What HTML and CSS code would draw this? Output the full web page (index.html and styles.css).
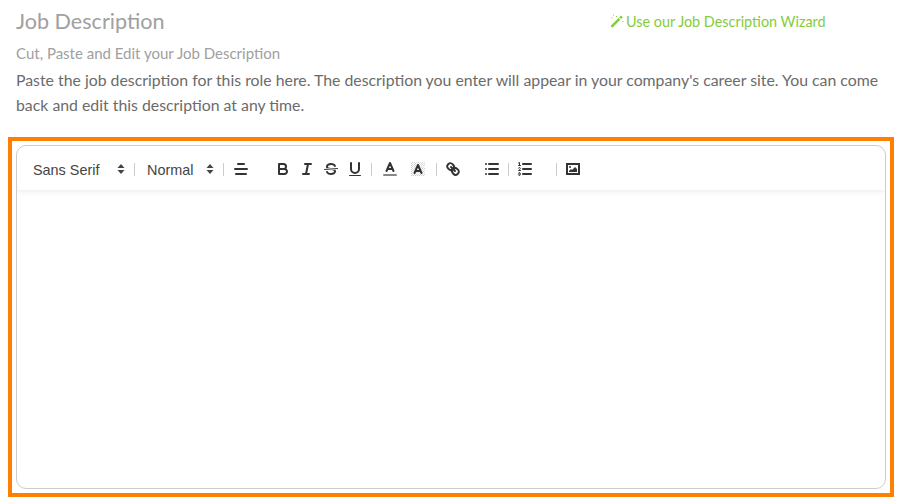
FILE: index.html
```html
<!DOCTYPE html>
<html lang="en">
<head>
    <meta charset="UTF-8">
    <title>Job Description</title>
    <link rel="stylesheet" href="styles.css">
</head>
<body>

<!-- heading -->
<header class="head-row">
    <h2 class="title">Job Description</h2>
    <a class="wizard-link" href="#">
        <svg class="wand" viewBox="0 0 14 14" width="14" height="14">
            <path d="M.5 12 8.5 4l1.8 1.8-8 8Z"/>
            <path d="M9.2 3.3l1.8-1.8 1.8 1.8-1.8 1.8Z"/>
            <path d="M3 .5h1v1H3ZM6 2h1v1H6ZM1.5 3.5h1v1h-1ZM12.5 7h1v1h-1Z"/>
        </svg>Use our Job Description Wizard</a>
</header>
<p class="subtitle">Cut, Paste and Edit your Job Description</p>
<p class="intro">Paste the job description for this role here. The description you enter will appear in your company's career site. You can come back and edit this description at any time.</p>

<!-- editor -->
<section class="highlight">
    <div class="editor">
        <div class="toolbar">
            <span class="picker picker-font">Sans Serif
                <svg class="arrows" viewBox="0 0 8 12" width="8" height="12"><path d="M4 1 7.5 5h-7ZM4 11 .5 7h7Z"/></svg>
            </span>
            <i class="sep sep-picker"></i>
            <span class="picker picker-size">Normal
                <svg class="arrows" viewBox="0 0 8 12" width="8" height="12"><path d="M4 1 7.5 5h-7ZM4 11 .5 7h7Z"/></svg>
            </span>
            <i class="sep"></i>
            <button class="btn btn-align">
                <svg viewBox="0 0 18 18"><path class="line" d="M15 9H3M14 14H4M12 4H6"/></svg>
            </button>
            <button class="btn">
                <svg viewBox="0 0 18 18">
                    <path class="line" d="M5,4H9.5A2.5,2.5,0,0,1,12,6.5v0A2.5,2.5,0,0,1,9.5,9H5V4Z"/>
                    <path class="line" d="M5,9h5.5A2.5,2.5,0,0,1,13,11.5v0A2.5,2.5,0,0,1,10.5,14H5V9Z"/>
                </svg>
            </button>
            <button class="btn">
                <svg viewBox="0 0 18 18"><path class="line" d="M7 4h6M5 14h6M8 14l2-10"/></svg>
            </button>
            <button class="btn">
                <svg viewBox="0 0 18 18">
                    <path class="thin" d="M15.5 8.5 2.5 9.5"/>
                    <path class="solid" d="M9.007,8C6.542,7.791,6,7.519,6,6.5,6,5.792,7.283,5,9,5c1.571,0,2.765.679,2.969,1.309a1,1,0,0,0,1.9-.617C13.356,4.106,11.354,3,9,3,6.2,3,4,4.538,4,6.5a3.2,3.2,0,0,0,.5,1.843Z"/>
                    <path class="solid" d="M8.984,10C11.457,10.208,12,10.479,12,11.5c0,.708-1.283,1.5-3,1.5-1.571,0-2.765-.679-2.969-1.309a1,1,0,1,0-1.9.617C4.644,13.894,6.646,15,9,15c2.8,0,5-1.538,5-3.5a3.2,3.2,0,0,0-.5-1.843Z"/>
                </svg>
            </button>
            <button class="btn">
                <svg viewBox="0 0 18 18">
                    <path class="line" d="M5,3V9a4.012,4.012,0,0,0,4,4H9a4.012,4.012,0,0,0,4-4V3"/>
                    <rect class="solid" x="3" y="15" width="12" height="1" rx=".5"/>
                </svg>
            </button>
            <i class="sep sep-tight"></i>
            <button class="btn btn-color">
                <svg viewBox="0 0 18 18">
                    <path class="color-bar" d="M3 15h12"/>
                    <path class="line" d="M5.5 11 9 3l3.5 8M11.63 9H6.38"/>
                </svg>
            </button>
            <button class="btn btn-bg">
                <svg viewBox="0 0 18 18">
                    <path class="hatch" d="M2 4 4 2M2 6 6 2M2 8 8 2M2 10 10 2M2 12 12 2M2 14 14 2M2 16 16 2M4 16 16 4M6 16 16 6M8 16l8-8M10 16l6-6M12 16l4-4M14 16l2-2"/>
                    <path class="line" d="M5.5 13 9 5l3.5 8M11.63 11H6.38"/>
                </svg>
            </button>
            <i class="sep sep-bg"></i>
            <button class="btn btn-link">
                <svg viewBox="0 0 18 18">
                    <path class="line" d="M7 7 11 11"/>
                    <path class="line" d="M8.9,4.577a3.476,3.476,0,0,1,.36,4.679A3.476,3.476,0,0,1,4.577,8.9C3.185,7.5,2.035,6.4,4.217,4.217S7.5,3.185,8.9,4.577Z"/>
                    <path class="line" d="M13.423,9.1a3.476,3.476,0,0,0-4.679-.36,3.476,3.476,0,0,0,.36,4.679c1.392,1.392,2.5,2.542,4.679.36S14.815,10.5,13.423,9.1Z"/>
                </svg>
            </button>
            <button class="btn btn-list">
                <svg viewBox="0 0 18 18"><path class="line" d="M6 4h9M6 9h9M6 14h9M3 4h.01M3 9h.01M3 14h.01"/></svg>
            </button>
            <i class="sep sep-tight"></i>
            <button class="btn">
                <svg viewBox="0 0 18 18">
                    <path class="line" d="M7 4h8M7 9h8M7 14h8"/>
                    <path class="thin" d="M2.5 5.5h2M3.5 5.5v-3l-1 .5"/>
                    <path class="thin" d="M4.5 10.5h-2c0-.234,1.85-1.076,1.85-2.234A.959.959,0,0,0,2.5,8.156"/>
                    <path class="thin" d="M2.5 14.846a.959.959,0,0,0,1.85-.109A.7.7,0,0,0,3.75,14a.688.688,0,0,0,.6-.736.959.959,0,0,0-1.85-.109M3.75 14h-.5"/>
                </svg>
            </button>
            <i class="sep sep-image"></i>
            <button class="btn">
                <svg viewBox="0 0 18 18">
                    <rect class="box" x="3" y="4" width="12" height="10"/>
                    <circle class="solid" cx="6" cy="7" r="1"/>
                    <path class="solid" d="M5 12v-1l2-2 1 1 3-3 2 2v3Z"/>
                </svg>
            </button>
        </div>
    </div>
</section>

</body>
</html>
```

FILE: styles.css
```css
/* page */
body {
    margin: 0;
    font-family: Lato, 'Open Sans', sans-serif;
    background: #ffffff;
    color: #666;
}
a {
    text-decoration: none;
}

/* heading */
.head-row {
    display: grid;
    grid-template-columns: 594px 1fr;
    align-items: center;
    height: 32px;
    padding: 5px 16px 0;
}
.title {
    margin: 0;
    font-size: 21.6px;
    font-weight: 400;
    color: #a0a0a0;
}
.wizard-link {
    font-size: 14.4px;
    color: #84cc3c;
    display: flex;
    align-items: center;
}
.wand {
    margin-right: 2px;
    fill: #84cc3c;
}
.subtitle {
    margin: 0;
    padding: 4px 16px 0;
    font-size: 15px;
    line-height: 24px;
    color: #a0a0a0;
}
.intro {
    margin: 0;
    padding: 2px 16px 0;
    font-size: 15.84px;
    line-height: 25px;
    color: #6b6b6b;
}

/* orange frame */
.highlight {
    margin: 20px 9px 0 8px;
    padding: 4px;
    border: 4px solid #ff8000;
    box-sizing: border-box;
    height: 360px;
}
.editor {
    height: 100%;
    box-sizing: border-box;
    border: 1px solid #ccc;
    border-radius: 10px;
    overflow: hidden;
}

/* toolbar */
.toolbar {
    display: flex;
    align-items: center;
    box-sizing: border-box;
    height: 44px;
    padding: 2px 0 0 16px;
    box-shadow: 0 2px 5px rgba(0, 0, 0, 0.07);
    font-family: 'Liberation Sans', Arial, sans-serif;
    font-size: 14.4px;
    color: #444;
}
.picker {
    display: flex;
    align-items: center;
    justify-content: space-between;
    flex: none;
    white-space: nowrap;
    padding-top: 2px;
}
.picker-font {
    width: 92px;
}
.picker-size {
    width: 67px;
}
.arrows {
    fill: #444;
    margin-top: -2px;
}
.sep {
    flex: none;
    width: 1px;
    height: 13px;
    margin: 0 5px 0 9px;
    background: #ccc;
}
.sep-picker {
    margin-right: 12px;
}
.sep-tight {
    margin: 0 4px;
}
.sep-bg {
    margin-left: 6px;
}
.sep-image {
    margin: 0 4px 0 19px;
}
.btn {
    flex: none;
    width: 24px;
    height: 24px;
    padding: 3px;
    border: 0;
    background: none;
    display: block;
}
.btn-align {
    margin-right: 18px;
}
.btn-color {
    margin-left: 2px;
}
.btn-bg {
    margin-left: 4px;
}
.btn-link {
    margin-left: -1px;
}
.btn-list {
    margin-left: 15px;
}
.btn svg {
    display: block;
    width: 18px;
    height: 18px;
}
.line,
.thin {
    fill: none;
    stroke: #333;
    stroke-width: 2;
    stroke-linecap: round;
    stroke-linejoin: round;
}
.thin {
    stroke-width: 1;
}
.box {
    fill: none;
    stroke: #333;
    stroke-width: 2;
}
.solid {
    fill: #333;
}
.color-bar {
    stroke: #888;
    stroke-width: 2;
    stroke-linecap: round;
    fill: none;
}
.hatch {
    stroke: #999;
    stroke-width: 0.7;
    stroke-dasharray: 1 1;
    fill: none;
}
```
